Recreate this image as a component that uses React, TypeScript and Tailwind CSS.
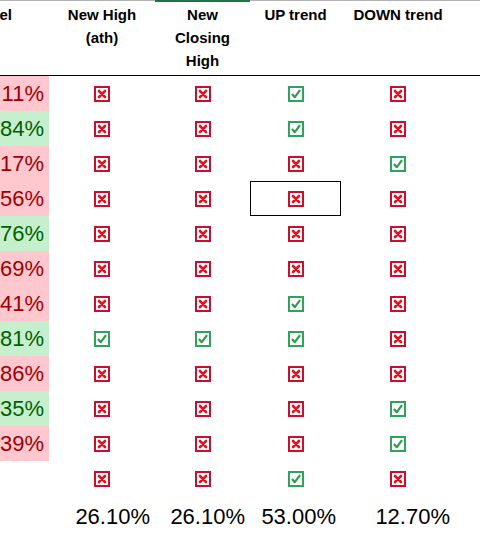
const XIcon = () => (
  <svg width="16" height="16" viewBox="0 0 16 16" className="block">
    <rect x="1" y="1" width="14" height="14" fill="#fff" stroke="#c8102e" strokeWidth="2" />
    <path d="M5 5 L11 11 M11 5 L5 11" stroke="#e3101e" strokeWidth="2.6" strokeLinecap="round" />
  </svg>
);

const CheckIcon = () => (
  <svg width="16" height="16" viewBox="0 0 16 16" className="block">
    <rect x="1" y="1" width="14" height="14" fill="#fff" stroke="#2ea35a" strokeWidth="2" />
    <path d="M4 8 L6.8 11.2 L12 4.2" fill="none" stroke="#2a9d4f" strokeWidth="2.2" strokeLinejoin="round" />
  </svg>
);

type Row = { pct?: string; up?: boolean; flags: boolean[] };

const rows: Row[] = [
  { pct: '11%', up: false, flags: [false, false, true, false] },
  { pct: '84%', up: true, flags: [false, false, true, false] },
  { pct: '17%', up: false, flags: [false, false, false, true] },
  { pct: '56%', up: false, flags: [false, false, false, false] },
  { pct: '76%', up: true, flags: [false, false, false, false] },
  { pct: '69%', up: false, flags: [false, false, false, false] },
  { pct: '41%', up: false, flags: [false, false, true, false] },
  { pct: '81%', up: true, flags: [true, true, true, false] },
  { pct: '86%', up: false, flags: [false, false, false, false] },
  { pct: '35%', up: true, flags: [false, false, false, true] },
  { pct: '39%', up: false, flags: [false, false, false, true] },
  { flags: [false, false, true, false] },
];

const totals = ['26.10%', '26.10%', '53.00%', '12.70%'];

const cols = 'grid grid-cols-[49px_106px_95px_91px_114px_1fr]';

export default function App() {
  return (
    <div
      className="w-[480px] h-[536px] overflow-hidden bg-white text-black"
      style={{ fontFamily: '"Liberation Sans", Arial, sans-serif' }}
    >
      {/* column header strip */}
      <div className={`${cols} h-[2px]`}>
        <div className="border-t border-[#b4b4b4]" />
        <div className="border-t border-[#b4b4b4]" />
        <div className="bg-[#217346]" />
        <div className="border-t border-[#b4b4b4]" />
        <div className="border-t border-[#b4b4b4]" />
        <div className="border-t border-[#b4b4b4]" />
      </div>

      {/* header row */}
      <div className={`${cols} h-[74px] border-b border-black text-[15px] font-bold leading-[23px] pt-px`}>
        <div className="overflow-hidden flex justify-end pr-[37px]">
          <span>Level</span>
        </div>
        <div className="text-center">New High<br />(ath)</div>
        <div className="text-center">New<br />Closing<br />High</div>
        <div className="text-center">UP trend</div>
        <div className="text-center">DOWN trend</div>
        <div />
      </div>

      {rows.map((r, i) => (
        <div key={i} className={`${cols} h-[35px]`}>
          <div
            className={
              r.pct
                ? r.up
                  ? 'bg-[#c6efce] text-[#006100] overflow-hidden flex items-center justify-end pr-[5px] text-[22px]'
                  : 'bg-[#ffc7ce] text-[#9c0006] overflow-hidden flex items-center justify-end pr-[5px] text-[22px]'
                : ''
            }
          >
            {r.pct}
          </div>
          {r.flags.map((f, j) => (
            <div
              key={j}
              className={
                i === 3 && j === 2
                  ? 'flex items-center justify-center border border-black'
                  : 'flex items-center justify-center'
              }
            >
              {f ? <CheckIcon /> : <XIcon />}
            </div>
          ))}
          <div />
        </div>
      ))}

      <div className={`${cols} h-[40px] text-[22px]`}>
        <div />
        {totals.map((t, i) => (
          <div key={i} className="flex items-center justify-end pr-[5px]">
            {t}
          </div>
        ))}
        <div />
      </div>
    </div>
  );
}
